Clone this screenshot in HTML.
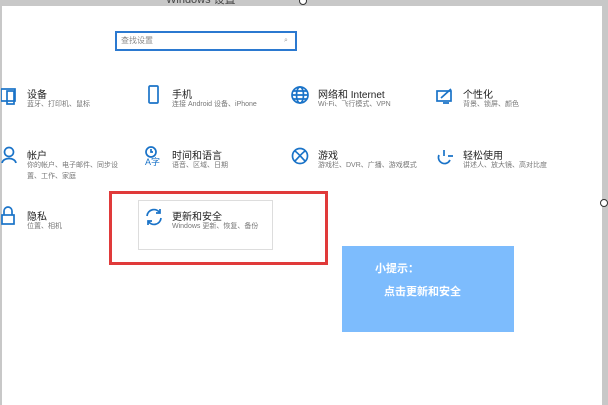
<!DOCTYPE html><html><head><meta charset="utf-8"><style>
body{margin:0;width:608px;height:405px;position:relative;overflow:hidden;background:#fff;font-family:"Liberation Sans","Noto Sans CJK SC",sans-serif}
.a{position:absolute}
.t{font-size:10px;color:#222;white-space:nowrap}
.s{font-size:7px;color:#777;white-space:nowrap;line-height:11px}
svg{position:absolute;fill:none;stroke:#1a73c8;stroke-width:1.7}
</style></head><body>
<div class="a" style="left:0;top:0;width:608px;height:6px;background:#c8c8c8"></div>
<div class="a" style="left:602px;top:0;width:6px;height:405px;background:#c8c8c8"></div>
<div class="a" style="left:0;top:0;width:2px;height:405px;background:#c8c8c8"></div>
<div class="a" style="left:166px;top:-9px;font-size:11px;color:#444">Windows 设置</div>
<div class="a" style="left:299px;top:-3px;width:6px;height:6px;border:1px solid #333;border-radius:50%;background:#fff"></div>
<div class="a" style="left:600px;top:199px;width:6px;height:6px;border:1px solid #333;border-radius:50%;background:#fff"></div>
<div class="a" style="left:115px;top:31px;width:178px;height:16px;border:2px solid #2b79d0"></div>
<div class="a s" style="left:121px;top:35px;font-size:8px;color:#888">查找设置</div>
<div class="a s" style="left:284px;top:35px;color:#999">⌕</div>
<svg style="left:1px;top:87px" width="16" height="18"><rect x="0" y="2" width="14" height="12"/><rect x="6" y="4" width="7" height="13"/></svg>
<div class="a t" style="left:27px;top:86px">设备</div><div class="a s" style="left:27px;top:99px">蓝牙、打印机、鼠标</div>
<svg style="left:148px;top:85px" width="12" height="20"><rect x="1" y="1" width="9" height="17" rx="1"/></svg>
<div class="a t" style="left:172px;top:86px">手机</div><div class="a s" style="left:172px;top:99px">连接 Android 设备、iPhone</div>
<svg style="left:291px;top:86px" width="18" height="18"><circle cx="9" cy="9" r="8"/><ellipse cx="9" cy="9" rx="3.5" ry="8"/><path d="M1 9h16M2 5h14M2 13h14"/></svg>
<div class="a t" style="left:318px;top:86px">网络和 Internet</div><div class="a s" style="left:318px;top:99px">Wi-Fi、飞行模式、VPN</div>
<svg style="left:436px;top:88px" width="18" height="16"><rect x="1" y="3" width="14" height="10"/><path d="M5 10l10-9M7 15h6"/></svg>
<div class="a t" style="left:463px;top:86px">个性化</div><div class="a s" style="left:463px;top:99px">背景、锁屏、颜色</div>
<svg style="left:1px;top:146px" width="16" height="18"><circle cx="8" cy="6" r="4.5"/><path d="M1 17c1-6 13-6 14 0"/></svg>
<div class="a t" style="left:27px;top:147px">帐户</div><div class="a s" style="left:27px;top:160px">你的帐户、电子邮件、同步设<br>置、工作、家庭</div>
<svg style="left:145px;top:146px" width="18" height="20"><circle cx="6" cy="6" r="5"/><path d="M6 3v3h2"/><text x="0" y="19" font-size="9" fill="#1a73c8" stroke="none">A字</text></svg>
<div class="a t" style="left:172px;top:147px">时间和语言</div><div class="a s" style="left:172px;top:160px">语音、区域、日期</div>
<svg style="left:291px;top:147px" width="18" height="18"><circle cx="9" cy="9" r="7.5"/><path d="M4 4c4 3 6 6 10 10M14 4c-4 3-6 6-10 10"/></svg>
<div class="a t" style="left:318px;top:147px">游戏</div><div class="a s" style="left:318px;top:160px">游戏栏、DVR、广播、游戏模式</div>
<svg style="left:436px;top:147px" width="18" height="18"><path d="M3 8a6 6 0 1 0 11 5M8 3v6M12 9h5"/></svg>
<div class="a t" style="left:463px;top:147px">轻松使用</div><div class="a s" style="left:463px;top:160px">讲述人、放大镜、高对比度</div>
<svg style="left:1px;top:206px" width="14" height="20"><path d="M3 9V5a4 4 0 0 1 8 0v4"/><rect x="1" y="9" width="12" height="9"/></svg>
<div class="a t" style="left:27px;top:208px">隐私</div><div class="a s" style="left:27px;top:221px">位置、相机</div>
<div class="a" style="left:138px;top:200px;width:133px;height:48px;border:1px solid #ddd"></div>
<svg style="left:145px;top:208px" width="18" height="18"><path d="M2 8a7 7 0 0 1 13-3M16 10a7 7 0 0 1-13 3M15 1v4h-4M3 17v-4h4"/></svg>
<div class="a t" style="left:172px;top:208px">更新和安全</div><div class="a s" style="left:172px;top:221px">Windows 更新、恢复、备份</div>
<div class="a" style="left:109px;top:191px;width:213px;height:68px;border:3px solid #e03a3a"></div>
<div class="a" style="left:342px;top:246px;width:172px;height:86px;background:#7dbcfd"></div>
<div class="a" style="left:375px;top:260px;color:#fff;font-size:11px;font-weight:bold">小提示：</div>
<div class="a" style="left:384px;top:283px;color:#fff;font-size:11px;font-weight:bold">点击更新和安全</div>
</body></html>
